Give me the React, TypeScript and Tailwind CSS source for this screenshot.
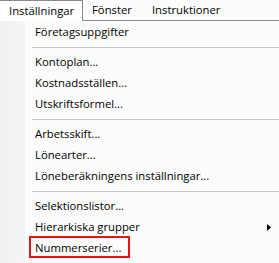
const items: (string | null)[] = [
  'Företagsuppgifter',
  null,
  'Kontoplan...',
  'Kostnadsställen...',
  'Utskriftsformel...',
  null,
  'Arbetsskift...',
  'Lönearter...',
  'Löneberäkningens inställningar...',
  null,
  'Selektionslistor...',
  'Hierarkiska grupper',
  'Nummerserier...',
]

export default function App() {
  return (
    <div className="w-[279px] h-[263px] overflow-hidden bg-[#fcfcfc] text-[11.3px] text-black font-['Open_Sans',sans-serif]">
      {/* Menu bar */}
      <div className="flex h-[21px]">
        <div className="w-[83px] border-t border-r border-[#8a8a8a] bg-white pl-[9px] leading-[19px]">
          Inställningar
        </div>
        <div className="flex-1 flex border-b border-[#8a8a8a] leading-[20px]">
          <span className="ml-[9px]">Fönster</span>
          <span className="ml-[20px]">Instruktioner</span>
        </div>
      </div>

      {/* Dropdown */}
      <div className="flex h-[242px]">
        <div className="w-[25px] bg-gradient-to-r from-[#efefef] to-[#f5f5f5]" />
        <div className="flex-1 pt-px">
          {items.map((item, i) =>
            item === null ? (
              <div key={i} className="py-[4px] pl-[7px]">
                <div className="h-px bg-[#c6c6c6]" />
              </div>
            ) : (
              <div key={i} className="relative h-[21px] flex items-center pl-[10px]">
                <span>{item}</span>
                {item === 'Hierarkiska grupper' && (
                  <svg className="absolute left-[242px] top-[7px]" width="4" height="7" viewBox="0 0 4 7">
                    <path d="M0 0 L4 3.5 L0 7 Z" fill="#000" />
                  </svg>
                )}
                {item === 'Nummerserier...' && (
                  <span className="absolute left-[4px] top-[-2px] w-[101px] h-[22px] border-2 border-[#ee1111]" />
                )}
              </div>
            )
          )}
        </div>
      </div>
    </div>
  )
}
